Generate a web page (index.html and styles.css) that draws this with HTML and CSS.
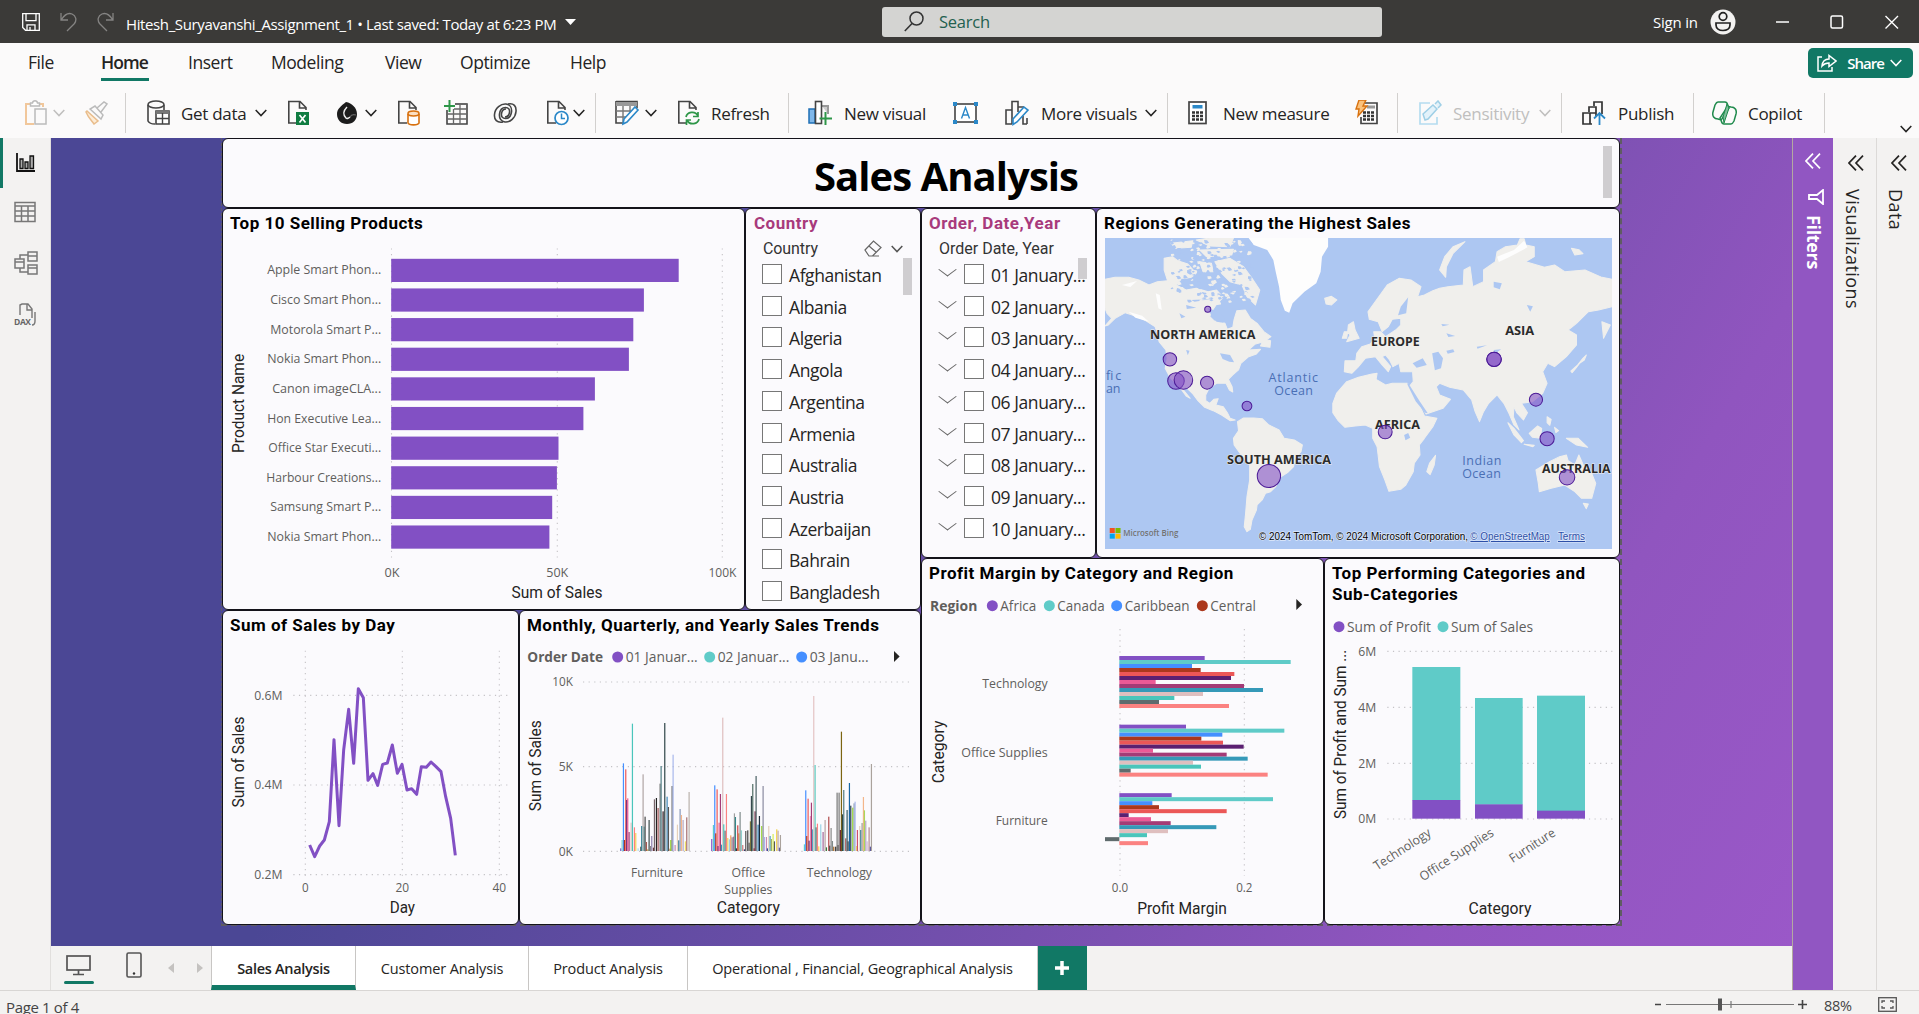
FILE: index.html
```html
<!DOCTYPE html>
<html lang="en">
<head>
<meta charset="utf-8">
<title>Hitesh_Suryavanshi_Assignment_1</title>
<link rel="stylesheet" href="styles.css">
</head>
<body>
<svg class="defs" width="0" height="0">
  <symbol id="chev" viewBox="0 0 12 8"><path d="M.7 1l5.3 5.6L11.3 1" fill="none" stroke="currentColor" stroke-width="1.5"/></symbol>
  <symbol id="page" viewBox="0 0 24 26"><path d="M10 23H1.8V1.5H13l6 6V10M12.500 1.500V8H19" fill="none" stroke="#444" stroke-width="1.6"/></symbol>
  <symbol id="collapse" viewBox="0 0 16 16"><path d="M8 .7L1 8l7 7.300M15 .7L8 8l7 7.300" fill="none" stroke="currentColor" stroke-width="1.700"/></symbol>
</svg>
<div class="app">
  <header class="titlebar">
    <svg class="save" width="18" height="18" viewBox="0 0 18 18"><path d="M.7.7h16.600v16.600H3.500L.7 14.500zM4 .7v7h10v-7M5 17.300v-5.500h8v5.500M8 14v3" fill="none" stroke="#fff" stroke-width="1.300"/></svg>
    <svg class="undo" width="17" height="20" viewBox="0 0 17 20"><path d="M1 1v7h7M1.500 7.500C5 2 9 .8 12 2c4 1.800 5 6 2.500 9.500L7 19" fill="none" stroke="#858483" stroke-width="1.300"/></svg>
    <svg class="redo" width="17" height="20" viewBox="0 0 17 20"><path d="M16 1v7H9M15.500 7.500C12 2 8 .8 5 2 1 3.800 0 8 2.500 11.500L10 19" fill="none" stroke="#858483" stroke-width="1.300"/></svg>
    <span class="doc">Hitesh_Suryavanshi_Assignment_1 • Last saved: Today at 6:23 PM</span>
    <svg class="caret" width="11" height="6" viewBox="0 0 11 6"><path d="M0 0h11L5.500 6z" fill="#fff"/></svg>
    <div class="search">
      <svg width="20" height="21" viewBox="0 0 20 21"><circle cx="12.500" cy="7.500" r="6.500" fill="none" stroke="#333" stroke-width="1.500"/><path d="M8 12.500L.8 20" stroke="#333" stroke-width="1.600"/></svg>
      <span>Search</span>
    </div>
    <span class="signin">Sign in</span>
    <svg class="user" width="26" height="26" viewBox="0 0 26 26"><circle cx="13" cy="13" r="12.500" fill="#f3f2f1"/><circle cx="13" cy="7.500" r="3.800" fill="none" stroke="#222" stroke-width="1.700"/><path d="M6 14h14v2c0 3.500-3 5.500-7 5.500S6 19.500 6 16z" fill="none" stroke="#222" stroke-width="1.700"/></svg>
    <svg class="win" width="128" height="16" viewBox="0 0 128 16"><path d="M1 8h13" stroke="#fff" stroke-width="1.500"/><rect x="56" y="2" width="11.500" height="12" rx="1.500" fill="none" stroke="#fff" stroke-width="1.500"/><path d="M110.500 2l12.500 12.500M123 2l-12.500 12.500" stroke="#fff" stroke-width="1.400"/></svg>
  </header>
  <nav class="menu">
    <div class="tabs"><span>File</span><span class="on">Home</span><span>Insert</span><span>Modeling</span><span>View</span><span>Optimize</span><span>Help</span></div>
    <button class="share">
      <svg width="20" height="18" viewBox="0 0 20 18"><path d="M5 3H1v14h14v-4M5 12c.5-5 3-7 7-7V1.500L19 7l-7 5.500V9c-3 0-5 .8-7 3z" fill="none" stroke="#fff" stroke-width="1.500"/></svg>
      <span>Share</span><svg width="12" height="8"><use href="#chev"/></svg>
    </button>
  </nav>
  <div class="ribbon">
    <svg width="24" height="26" viewBox="0 0 24 26"><path d="M5 4H1v20h8M15 4h3v3" fill="none" stroke="#f1c79b" stroke-width="2"/><path d="M5.500 6V3h2c.5-3 4.500-3 5 0h2v3z" fill="#fff" stroke="#bbb" stroke-width="1.500"/><rect x="10" y="9" width="11" height="15" fill="#fbfafa" stroke="#bbb" stroke-width="1.500"/></svg>
    <svg class="off" width="12" height="8"><use href="#chev"/></svg>
    <svg width="24" height="24" viewBox="0 0 24 24"><path d="M2 10l11 10-4 3c-3-4-6-7-8-12z" fill="#fdecd6" stroke="#e9bd8c" stroke-width="1.500"/><path d="M5 8l11 10 2-4-8-9zM12 7l7-6 3 2-6 8" fill="#fbfafa" stroke="#bbb" stroke-width="1.500"/></svg>
    <i></i>
    <svg width="24" height="26" viewBox="0 0 24 26"><ellipse cx="9" cy="4.500" rx="8" ry="3.500" fill="none" stroke="#444" stroke-width="1.600"/><path d="M1 5v16c1 2 4 3 7 3M17 5v5" fill="none" stroke="#444" stroke-width="1.600"/><path d="M9 11h13v13H9z" fill="#fff" stroke="#444" stroke-width="1.600"/><path d="M9 12.500h13" stroke="#777" stroke-width="3"/><path d="M9 18.500h13M15.500 13v11" stroke="#444" stroke-width="1.400"/></svg>
    <span>Get data</span>
    <svg width="12" height="8"><use href="#chev"/></svg>
    <svg width="24" height="26" viewBox="0 0 24 26"><use href="#page"/><rect x="9" y="12" width="13" height="13" fill="#107c41"/><path d="M12.500 15l6 7.500M18.500 15l-6 7.500" stroke="#fff" stroke-width="1.700"/></svg>
    <svg width="24" height="24" viewBox="0 0 24 24"><path d="M10 1c6 1 11 6 11 12s-4 10-10 10S1 19 1 13C1 8 5 5 10 1z" fill="#1c1c1c"/><path d="M11 6c-4 4-4 8-1 11 1 1 3 0 4-1" fill="none" stroke="#eee" stroke-width="1.500"/><path d="M14 16c1-2 3-3 6-2" fill="none" stroke="#666" stroke-width="1.200"/></svg>
    <svg width="12" height="8"><use href="#chev"/></svg>
    <svg width="24" height="26" viewBox="0 0 24 26"><use href="#page"/><path d="M11 14v9c1 2.500 10 2.500 11 0v-9" fill="#fff" stroke="#d8710f" stroke-width="1.600"/><ellipse cx="16.500" cy="13.500" rx="5.500" ry="2.500" fill="#fbe0c3" stroke="#d8710f" stroke-width="1.600"/></svg>
    <svg width="24" height="26" viewBox="0 0 24 26"><path d="M3 10v14h20V4H11" fill="none" stroke="#444" stroke-width="1.600"/><path d="M11 4h12M3 14h20M3 19h20M9.500 9v15M16 5v19M10 9h13" stroke="#666" stroke-width="1.300"/><path d="M5.500 0v12M0 6h11" stroke="#2e9648" stroke-width="2"/></svg>
    <svg width="25" height="24" viewBox="0 0 25 24"><path d="M10 21C4 22 1 19 1.500 13.500 2 7 8 2.500 13 3c4 .5 6 4 5.500 8-.5 4-3 6.500-6 6.500s-4.500-2-4-5c.4-2.500 2-4.500 4.500-4.500" fill="none" stroke="#444" stroke-width="1.600"/><path d="M15 3c6-1 8.500 2 8 7.500C22.500 17 17 21.500 12 21c-4-.5-6-4-5.500-8 .5-4 3-6.500 6-6.500s4.500 2 4 5c-.4 2.500-2 4.500-4.500 4.500" fill="none" stroke="#444" stroke-width="1.600"/></svg>
    <svg width="24" height="26" viewBox="0 0 24 26"><use href="#page"/><circle cx="15.500" cy="18" r="6.500" fill="#fff" stroke="#2b88c8" stroke-width="1.700"/><path d="M15.500 13.500V18.500H19" fill="none" stroke="#2b88c8" stroke-width="1.500"/></svg>
    <svg width="12" height="8"><use href="#chev"/></svg>
    <i></i>
    <svg width="26" height="26" viewBox="0 0 26 26"><path d="M1 1.500h21V8M1 1v22h7" fill="none" stroke="#444" stroke-width="1.600"/><path d="M1 4h21" stroke="#999" stroke-width="4"/><path d="M1 11h18M1 17h11M8 6v16M15 6v8" stroke="#777" stroke-width="1.400"/><path d="M9 19L20 7l3 3-11 12-4 2z" fill="#fff" stroke="#2b88c8" stroke-width="1.600"/></svg>
    <svg width="12" height="8"><use href="#chev"/></svg>
    <svg width="24" height="26" viewBox="0 0 24 26"><use href="#page"/><path d="M9 17c1-5 9-7 12-1M21 12v4.500h-5M22 19c-1 5-9 7-12 1M9.500 25v-5H14" fill="none" stroke="#2e9648" stroke-width="1.700"/></svg>
    <span>Refresh</span>
    <i></i>
    <svg width="26" height="26" viewBox="0 0 26 26"><rect x="1" y="9" width="6" height="14" fill="#7fb8ea" stroke="#1f6fb5" stroke-width="1.500"/><path d="M14 6h6v8" fill="#ccc" stroke="#999" stroke-width="2"/><rect x="7.500" y="1.500" width="6" height="22" fill="#fff" stroke="#444" stroke-width="1.600"/><path d="M17.500 12v13M11.500 18.500H24" stroke="#2e9648" stroke-width="2"/></svg>
    <span>New visual</span>
    <svg width="26" height="22" viewBox="0 0 26 22"><rect x="2" y="2" width="21" height="18" fill="#fff" stroke="#444" stroke-width="1.600"/><path d="M0 0h4v4H0zM21 0h4v4h-4zM0 18h4v4H0zM21 18h4v4h-4z" fill="#2b88c8"/><path d="M8.500 16.500l4-11 4 11M10 13h5.500" fill="none" stroke="#2b88c8" stroke-width="1.400"/></svg>
    <svg width="26" height="26" viewBox="0 0 26 26"><path d="M7 10H1v14h6M7 24V1.500h6V12M13 7h6M18 16v8h4M22 24v-6" fill="none" stroke="#444" stroke-width="1.600"/><path d="M8 19L19 7l4 3-11 12-4 2.500z" fill="#fff" stroke="#2b88c8" stroke-width="1.600"/></svg>
    <span>More visuals</span>
    <svg width="12" height="8"><use href="#chev"/></svg>
    <i></i>
    <svg width="20" height="26" viewBox="0 0 20 26"><rect x="1" y="2" width="17" height="21.500" fill="#fff" stroke="#444" stroke-width="1.700"/><rect x="4.500" y="5" width="10" height="3.500" fill="#2b88c8"/><path d="M4 12.500h11M4 16h11M4 19.500h11" stroke="#333" stroke-width="2.300" stroke-dasharray="3 1"/></svg>
    <span>New measure</span>
    <svg width="24" height="26" viewBox="0 0 24 26"><path d="M10 3h12v20.500H6V17" fill="none" stroke="#444" stroke-width="1.700"/><path d="M8 12.500h11M8 16h11M8 19.500h11" stroke="#333" stroke-width="2.300" stroke-dasharray="3 1"/><path d="M12 7h8" stroke="#999" stroke-width="3"/><path d="M4 0h7L8 6h4L3 16l1-7H1z" fill="#fbc27c" stroke="#d8710f" stroke-width="1.400"/></svg>
    <i></i>
    <svg width="24" height="26" viewBox="0 0 24 26"><path d="M11 3H1v21h17v-7" fill="none" stroke="#b5dcef" stroke-width="1.700"/><path d="M4 14L14 5l4 4-9 10-3 1zM16 4l3-3 3 4-3 3" fill="#e3f2fa" stroke="#9fcfe6" stroke-width="1.500"/></svg>
    <span class="dim">Sensitivity</span>
    <svg class="off" width="12" height="8"><use href="#chev"/></svg>
    <i></i>
    <svg width="25" height="26" viewBox="0 0 25 26"><path d="M10 24H1V13h7v11M7 12V7h7v4M12 6V2h8v12M14 16V8M8 13h6" fill="none" stroke="#333" stroke-width="1.700"/><path d="M17.500 25V13M12 18.500l5.500-5.500 5.500 5.500" fill="none" stroke="#2b88c8" stroke-width="1.800"/></svg>
    <span>Publish</span>
    <i></i>
    <svg width="25" height="26" viewBox="0 0 25 26"><path d="M6 2h7c3 0 2 3 4 6l-6 9c-1 3-2 3-5 2-4 0-6-3-5-7L3 5c1-2 2-3 3-3z" fill="none" stroke="#1f8a4c" stroke-width="1.500"/><path d="M19 24h-7c-3 0-2-3-4-6l6-9c1-3 2-3 5-2 4 0 6 3 5 7l-2 7c-1 2-2 3-3 3z" fill="none" stroke="#1f8a4c" stroke-width="1.500"/><path d="M11 17l4-13 2 4-5 15z" fill="#7fbf9b" stroke="#1f8a4c"/></svg>
    <span>Copilot</span>
    <i></i>
    <svg class="more" width="12" height="8"><use href="#chev"/></svg>
  </div>
  <div class="work">
    <aside class="rail">
      <svg width="20" height="20" viewBox="0 0 20 20"><path d="M1 0v18h18" fill="none" stroke="#111" stroke-width="1.800"/><path d="M4 6h3v9.500H4zM9 9h3v6.500H9zM14 3h3.500v12.500H14z" fill="#aaa" stroke="#111" stroke-width="1.300"/></svg>
      <svg width="22" height="22" viewBox="0 0 22 22"><path d="M1 1.500h20v19H1zM1 5h20M1 10h20M1 15h20M7.500 5v15M14 5v15" fill="none" stroke="#777" stroke-width="1.500"/></svg>
      <svg width="24" height="24" viewBox="0 0 24 24"><path d="M14 1h9v9h-9zM14 5h9M14 14h9v9h-9zM14 17h9M1 8h9v9H1zM1 11h9M6 8V4h8M6 17v4h8" fill="none" stroke="#777" stroke-width="1.500"/></svg>
      <svg width="24" height="24" viewBox="0 0 24 24"><path d="M6 12V2l2-1h6l4 5v9M13 1v6h5M21 9v9c0 3-1 4-3 4" fill="none" stroke="#777" stroke-width="1.400"/><text x="0" y="21.500" font-size="8.500" font-weight="700" fill="#666" textLength="17">DAX</text></svg>
    </aside>
    <main class="center">
      <div class="canvas">
        <div class="report">
          <section class="card banner"><h1>Sales Analysis</h1><b class="thumb"></b></section>
          <div class="cols">
            <div class="half">
              <div class="row upper-left">
                <section class="card"><h2>Top 10 Selling Products</h2><svg id="top10" width="521" height="372" viewBox="223 236.600 521 372"></svg></section>
                <section class="card slicer country"><h2 class="rose">Country</h2>
                  <div class="sub"><span>Country</span><svg class="eraser" width="18" height="17" viewBox="0 0 18 17"><path d="M1 10L9.500 1 17 7.500 8.500 16H5zM5 6l7.500 6.500M6 16h9" fill="none" stroke="#666" stroke-width="1.200"/></svg><svg width="12" height="8"><use href="#chev"/></svg></div>
                  <ul><li>Afghanistan</li><li>Albania</li><li>Algeria</li><li>Angola</li><li>Argentina</li><li>Armenia</li><li>Australia</li><li>Austria</li><li>Azerbaijan</li><li>Bahrain</li><li>Bangladesh</li></ul><b class="thumb"></b></section>
              </div>
              <div class="row lower-left">
                <section class="card"><h2>Sum of Sales by Day</h2><svg id="days" width="295" height="283" viewBox="24 117 885 849"></svg></section>
                <section class="card"><h2>Monthly, Quarterly, and Yearly Sales Trends</h2><svg id="trend" width="400" height="283" viewBox="15 117 1200 849"></svg></section>
              </div>
            </div>
            <div class="half">
              <div class="row upper-right">
                <section class="card slicer dates"><h2 class="rose">Order, Date,Year</h2>
                  <div class="sub"><span>Order Date, Year</span></div>
                  <ul><li>01 January...</li><li>02 January...</li><li>03 January...</li><li>04 January...</li><li>06 January...</li><li>07 January...</li><li>08 January...</li><li>09 January...</li><li>10 January...</li></ul><b class="thumb"></b></section>
                <section class="card mapcard"><h2>Regions Generating the Highest Sales</h2><svg id="map" width="507" height="311" viewBox="30 144 1500 933" preserveAspectRatio="none"></svg></section>
              </div>
              <div class="row lower-right">
                <section class="card"><h2>Profit Margin by Category and Region</h2><svg id="margin" width="401" height="336" viewBox="21 109 1203 1008"></svg></section>
                <section class="card"><h2 class="two">Top Performing Categories and Sub-Categories</h2><svg id="cats" width="295" height="312" viewBox="30 181 885 936"></svg></section>
              </div>
            </div>
          </div>
        </div>
      </div>
      <footer class="sheets">
        <div class="views">
          <svg class="on" width="30" height="32" viewBox="0 0 30 32"><rect x="3" y="3" width="23" height="14" fill="none" stroke="#555" stroke-width="1.700"/><path d="M14.500 17v4M9 21.500h11" stroke="#555" stroke-width="1.700"/><rect y="28" width="30" height="3" rx="1.500" fill="#117865"/></svg>
          <svg width="16" height="26" viewBox="0 0 16 26"><rect x="1" y="1" width="14" height="24" rx="1.500" fill="none" stroke="#555" stroke-width="1.600"/><circle cx="8" cy="21.500" r="1.200" fill="#333"/></svg>
          <svg width="6" height="10" viewBox="0 0 6 10"><path d="M6 0v10L0 5z" fill="#c4c2c0"/></svg>
          <svg width="6" height="10" viewBox="0 0 6 10"><path d="M0 0v10l6-5z" fill="#c4c2c0"/></svg>
        </div>
        <span class="sheet on">Sales Analysis</span><span class="sheet">Customer Analysis</span><span class="sheet">Product Analysis</span><span class="sheet">Operational , Financial, Geographical Analysis</span>
        <span class="add"><svg width="14" height="14" viewBox="0 0 14 14"><path d="M7 0v14M0 7h14" stroke="#fff" stroke-width="3.500"/></svg></span>
      </footer>
    </main>
    <aside class="pane filters"><svg width="16" height="16"><use href="#collapse"/></svg><svg class="funnel" width="16" height="16" viewBox="0 0 16 16"><path d="M15 1v14L9 10H1V6h8z" fill="none" stroke="#fff" stroke-width="1.800"/></svg><span>Filters</span></aside>
    <aside class="pane"><svg width="16" height="16"><use href="#collapse"/></svg><span>Visualizations</span></aside>
    <aside class="pane data"><svg width="16" height="16"><use href="#collapse"/></svg><span>Data</span></aside>
  </div>
  <footer class="status"><span class="pg">Page 1 of 4</span>
    <svg width="152" height="16" viewBox="0 0 152 16"><path d="M0 7.500h6M143 7.500h9M147.500 3v9" stroke="#444" stroke-width="1.600"/><path d="M11 7.500h128M76 4v7" stroke="#777" stroke-width="1.200"/><rect x="63" y="1.500" width="4" height="12" fill="#555"/></svg>
    <span class="pct">88%</span>
    <svg width="19" height="15" viewBox="0 0 19 15"><rect x=".7" y=".7" width="17.600" height="13.600" fill="none" stroke="#555" stroke-width="1.300"/><path d="M4 6V4h3M12 4h3v2M15 9v2h-3M7 11H4V9" fill="none" stroke="#555" stroke-width="1.300"/></svg>
  </footer>
</div>
<script src="script.js"></script>
</body>
</html>
```
FILE: styles.css
```css
* { box-sizing: border-box; margin: 0; padding: 0; }
body { width: 1919px; height: 1014px; overflow: hidden; font-family: "Open Sans", "Noto Sans", sans-serif; color: #252423; }
svg { display: block; flex: none; }
svg text { font-family: "Open Sans", "Noto Sans", sans-serif; }
.defs { position: absolute; }
.app { height: 1014px; display: flex; flex-direction: column; background: #f3f2f1; }

.titlebar { height: 43px; flex: none; background: #3b3a38; display: flex; align-items: center; color: #fff; padding-left: 22px; }
.undo { margin-left: 20px; }
.redo { margin-left: 20px; }
.doc { margin-left: 12px; width: 430px; font-size: 15px; letter-spacing: -.38px; white-space: nowrap; padding-top: 5px; }
.caret { margin-left: 9px; }
.search { margin-left: 306px; width: 500px; height: 30px; background: #d4d4d2; border-radius: 3px; display: flex; align-items: center; padding-left: 22px; gap: 15px; color: #23604f; font-size: 16.500px; letter-spacing: -.25px; }
.signin { margin-left: 271px; width: 45px; font-size: 15px; letter-spacing: -.2px; white-space: nowrap; }
.user { margin-left: 12px; }
.win { margin-left: 39px; }

.menu { height: 39px; flex: none; background: #fbfafa; display: flex; justify-content: space-between; padding: 5px 6px 0 28px; }
.tabs { display: grid; grid-template-columns: 73px 87px 83px 114px 75px 110px 60px; justify-items: start; font-size: 17.500px; letter-spacing: -.45px; line-height: 29px; height: 34px; }
.tabs .on { font-weight: 600; border-bottom: 3px solid #117865; letter-spacing: -.9px; height: 33px; width: 48px; }
.share { width: 105px; height: 30px; border: 0; border-radius: 5px; background: #117865; color: #fff; display: flex; align-items: center; padding-left: 9px; font: 600 15px "Open Sans", sans-serif; letter-spacing: -1px; }
.share span { margin: 0 6px 0 10px; width: 37px; }

.ribbon { height: 56px; flex: none; background: #fbfafa; display: grid; align-items: center; padding: 6px 0 0 25px; font-size: 17px; letter-spacing: -.3px; white-space: nowrap;
  grid-template-columns: 28px 32px 40px 22px 34px 74px 32px 49px 29px 32px 47px 49px 53px 27px 22px 20px 30px 32px 34px 77px 20px 36px 109px 52px 36px 104px 22px 21px 35px 132px 42px 22px 34px 86px 22px 21px 36px 75px 19px 36px 76px 76px 12px; }
.ribbon i { width: 1px; height: 40px; background: #d2d0ce; }
.ribbon .dim { color: #c0bfbe; }
.off { color: #c0bfbe; }
.more { align-self: end; margin-bottom: 5px; }

.work { height: 852px; flex: none; display: flex; }
.rail { width: 51px; background: linear-gradient(#117865, #117865) 0 0 / 3px 50px no-repeat #f3f2f1; border-right: 1px solid #e1dfdd; display: flex; flex-direction: column; padding: 15px 0 0 14px; gap: 28px; }
.rail svg:first-child { margin: 0 0 0 2px; }
.center { width: 1742px; }
.canvas { height: 808px; padding-left: 170px; background: linear-gradient(120deg, #4b4795 30%, #7c51b2 69%, #9055bf 83%, #9a58c8 100%); }
.report { width: 1401px; height: 788px; border: 1px dashed #5f5c62; border-width: 0 2px 2px 1px; }
.card { background: #fbfafd; border: 1px solid #14131a; border-radius: 6px; position: relative; flex: none; overflow: hidden; }
.card h2 { font: 700 17px/20px Roboto, sans-serif; letter-spacing: .5px; color: #000; height: 28px; padding: 4px 0 0 7px; white-space: nowrap; }
.card h2.two { height: 52px; white-space: normal; line-height: 21px; padding-right: 28px; }
.card h2.rose { color: #a83a7c; }
.slicer.country h2 { padding-left: 8px; }
.banner { height: 70px; }
.banner h1 { font-size: 40px; line-height: 74px; letter-spacing: -.94px; color: #000; text-align: center; padding-left: 50px; }
.thumb { position: absolute; background: #cfcdd0; width: 9px; }
.banner .thumb { right: 7px; top: 7px; height: 52px; }
.cols, .row { display: flex; }
.half { width: 699px; }
.upper-left .card { height: 402px; width: 523px; }
.upper-left .country { width: 176px; }
.lower-left .card { height: 315px; width: 297px; }
.lower-left .card + .card { width: 402px; }
.upper-right .card { height: 350px; width: 175px; }
.upper-right .mapcard { width: 524px; }
.mapcard svg { margin: 1px 0 0 8px; }
.lower-right .card { height: 367px; width: 403px; }
.lower-right .card + .card { width: 296px; }
.slicer .sub { display: flex; align-items: center; height: 23px; padding-left: 17px; font: 16px Roboto, sans-serif; letter-spacing: -.1px; color: #333; }
.slicer .sub .eraser { margin: 0 9px 0 auto; }
.slicer .sub svg:last-child { margin-right: 17px; color: #555; }
.slicer ul { list-style: none; }
.slicer li { height: 31.730px; line-height: 30px; font-size: 17.500px; letter-spacing: -.42px; padding-left: 43px; position: relative; white-space: nowrap; }
.slicer li::before { content: ""; position: absolute; left: 16px; top: 4px; width: 18px; height: 18px; border: 1px solid #777; background: #fff; }
.slicer .thumb { right: 8px; top: 49px; height: 37px; }
.dates .thumb { height: 21px; }
.dates .sub { letter-spacing: 0; }
.dates li { padding-left: 69px; }
.dates li::before { left: 42px; }
.dates li::after { content: ""; position: absolute; left: 19px; top: 3px; width: 12px; height: 12px; border: solid #666; border-width: 0 1px 1px 0; transform: scaleY(.75) rotate(45deg); }

.sheets { height: 44px; background: #f3f2f1; display: flex; font-size: 14.500px; letter-spacing: -.12px; line-height: 46px; }
.views { width: 160px; display: flex; padding: 7px 0 0 13px; }
.views svg:nth-child(2) { margin: -1px 0 0 32px; }
.views svg:nth-child(3) { margin: 10px 23px 0 26px; }
.views svg:nth-child(4) { margin-top: 10px; }
.sheet { background: #fff; border-right: 1px solid #c8c6c4; text-align: center; white-space: nowrap; width: 173px; }
.sheet.on { width: 145px; border-bottom: 5px solid #117865; border-left: 1px solid #c8c6c4; font-weight: 600; letter-spacing: -.3px; }
.sheet:nth-of-type(3) { width: 159px; }
.sheet:nth-of-type(4) { width: 350px; }
.add { width: 49px; background: #117865; display: grid; place-items: center; }

.pane { width: 44px; border-right: 1px solid #dcdad8; padding: 17px 0 0 15px; color: #252423; }
.pane span { writing-mode: vertical-rl; font-size: 18px; font-weight: 500; letter-spacing: .45px; line-height: 20px; margin: 18px 0 0 -5px; display: block; }
.pane.data { width: 42px; border: 0; padding-left: 14px; }
.pane.filters { width: 41px; background: #9156c2; border-left: 1px solid #b3a9a0; border-right: 0; color: #fff; padding: 15px 0 0 12px; }
.filters .funnel { margin: 20px 0 0 3px; }
.filters span { font-weight: 700; margin: 10px 0 0 -1px; letter-spacing: -.35px; }

.status { flex: 1; border-top: 1px solid #d8d6d4; display: flex; align-items: flex-start; padding: 7px 0 0 6px; font-size: 15px; letter-spacing: -.35px; color: #444; }
.pg { width: 1649px; line-height: 18px; height: 16px; }
.status svg { margin-top: -1px; }
.pct { width: 54px; margin-left: 17px; line-height: 16px; font-size: 14.500px; }
```
FILE: script.js
```js
const fill = (id, parts) => { document.getElementById(id).innerHTML = parts.join(''); };
const rect = (x, y, w, h, c, extra = '') => `<rect x="${x}" y="${y}" width="${w}" height="${h}" fill="${c}" ${extra}/>`;
const dots = (x1, y1, x2, y2, k = 1) => `<path d="M${x1} ${y1}L${x2} ${y2}" stroke="#c4c2c6" stroke-width="${1.1 * k}" stroke-dasharray="${1.2 * k} ${4.4 * k}"/>`;
// Text with a fixed advance width; rot turns it a quarter to the left, or by the given angle.
function text(x, y, s, size, len, o = {}) {
  const rot = o.rot ? `transform="rotate(${o.rot} ${x} ${y})"` : '';
  const tl = len ? `textLength="${len}" lengthAdjust="spacingAndGlyphs"` : '';
  return `<text x="${x}" y="${y}" font-size="${size}" ${tl} ${rot} text-anchor="${o.a || 'start'}" fill="${o.c || '#605e5c'}" style="font-weight:${o.b || 400};${o.din ? 'font-family:Roboto,sans-serif' : ''};${o.css || ''}">${s}</text>`;
}
const din = { din: 1, a: 'middle', c: '#252423' };
const dinV = { ...din, rot: -90 };

// Top 10 products
const products = [['Apple Smart Phon...', 678.7, 114], ['Cisco Smart Phon...', 643.9, 111], ['Motorola Smart P...', 633.3, 111], ['Nokia Smart Phon...', 628.9, 114], ['Canon imageCLA...', 594.9, 109], ['Hon Executive Lea...', 583.4, 114], ['Office Star Executi...', 558.5, 113], ['Harbour Creations...', 556.9, 115], ['Samsung Smart P...', 552.2, 111], ['Nokia Smart Phon...', 549.4, 114]];
fill('top10', [
  dots(391.5, 248, 391.5, 561), dots(557.3, 248, 557.3, 561), dots(722.3, 248, 722.3, 561),
  ...products.map(([n, end, w], i) => rect(391.2, 258.4 + i * 29.63, end - 391.2, 23.2, '#8250c4') + text(381.2, 274 + i * 29.63, n, 12.5, w, { a: 'end' })),
  text(392, 577, '0K', 12.5, 15, { a: 'middle' }), text(557.3, 577, '50K', 12.5, 22, { a: 'middle' }), text(722.5, 577, '100K', 12.5, 28, { a: 'middle' }),
  text(557, 598, 'Sum of Sales', 16, 91, din), text(244, 403, 'Product Name', 16, 99, dinV)
]);

// Sales by day
const pts = '284,735 299,770 314,738 328,720 343,665 357,419 372,677 386,450 401,328 416,490 430,266 445,293 459,541 474,521 488,556 503,493 517,489 532,435 547,520 561,493 576,570 590,566 605,583 619,500 634,502 648,486 663,500 678,515 692,590 707,655 721,766';
fill('days', [
  ...[271, 562, 853].map(x => dots(x, 152, x, 830, 3)), ...[286, 555, 824].map(y => dots(235, y, 880, y, 3)),
  `<polyline points="${pts}" fill="none" stroke="#8250c4" stroke-width="9" stroke-linejoin="round"/>`,
  ...[['0.6M', 300], ['0.4M', 568], ['0.2M', 837]].map(([t, y]) => text(118, y, t, 38, 85)),
  text(271, 876, '0', 38, 20, { a: 'middle' }), text(562, 876, '20', 38, 41, { a: 'middle' }), text(853, 876, '40', 38, 41, { a: 'middle' }),
  text(562, 938, 'Day', 48, 76, din), text(88, 486, 'Sum of Sales', 48, 273, dinV)
]);

// Sales trends: x, top, colour
const bars = [
  [317, 745, '#8250c4'], [321, 720, '#7fd8d0'], [325, 490, '#458fff'], [328, 720, '#ab381d'], [332, 508, '#eb5757'], [335, 600, '#5b2071'], [338, 595, '#ec5a96'], [342, 696, '#a43b76'], [348, 668, '#e6c0c0'], [352, 371, '#4ac5bb'], [358, 682, '#fb8281'], [362, 699, '#f4d25a'], [369, 745, '#b0dcec'], [377, 740, '#555'], [380, 678, '#1f7a8c'], [384, 523, '#b0a4a4'], [387, 680, '#5f9ea0'], [390, 650, '#4a4a4a'], [394, 726, '#a45a52'], [398, 748, '#bda23c'], [402, 660, '#3b4a4a'], [406, 738, '#888'], [410, 708, '#8c7fae'], [415, 743, '#5e2e2e'], [418, 598, '#77656a'], [424, 594, '#222'], [429, 624, '#a05050'], [435, 551, '#777'], [438, 498, '#4f7c83'], [444, 634, '#301a22'], [449, 369, '#2f4648'], [456, 590, '#3f87b7'], [460, 621, '#555'], [465, 746, '#a6611a'], [467, 720, '#95d52a'], [471, 558, '#666'], [474, 464, '#a8b7ec'], [480, 735, '#c98ab0'], [487, 674, '#e5d0bb'], [491, 721, '#397d93'], [495, 627, '#8797b8'], [499, 645, '#f4b58a'], [504, 660, '#b4a6c0'], [511, 724, '#f0e16a'], [515, 652, '#a67070'], [522, 576, '#b9b1ab'],
  [590, 717, '#8250c4'], [595, 675, '#5fcbc8'], [599, 556, '#458fff'], [602, 700, '#ab381d'], [606, 568, '#eb5757'], [609, 738, '#5b2071'], [612, 668, '#ec5a96'], [616, 582, '#a43b76'], [619, 734, '#3599b8'], [623, 353, '#dfbfbf'], [626, 673, '#4ac5bb'], [630, 692, '#5f6b6d'], [634, 582, '#fb8281'], [638, 714, '#f4d25a'], [643, 718, '#9ad3e5'], [647, 706, '#f0a060'], [651, 712, '#888'], [655, 710, '#a66999'], [658, 640, '#a0a0a0'], [661, 651, '#35888a'], [664, 745, '#333'], [668, 676, '#cf4444'], [671, 700, '#d08040'], [675, 636, '#7f8a8a'], [679, 691, '#8fd0cc'], [683, 735, '#c77'], [688, 748, '#336'], [692, 693, '#555'], [698, 691, '#444'], [702, 728, '#555'], [706, 664, '#8a7d3c'], [709, 588, '#35484d'], [713, 552, '#4f6c63'], [717, 745, '#8b3434'], [720, 634, '#701c3a'], [723, 528, '#495f63'], [729, 674, '#2a78b0'], [733, 648, '#1e2c3a'], [740, 678, '#95d52a'], [744, 558, '#8a8aa0'], [748, 711, '#a8b7ec'], [754, 711, '#c98ab0'], [757, 745, '#2e50a0'], [761, 678, '#e5d0bb'], [765, 708, '#459bc0'], [769, 717, '#a8b060'], [774, 702, '#d6ee56'], [778, 724, '#555'], [785, 688, '#f0d040'], [789, 692, '#c0a8b0'], [793, 743, '#5050a0'], [796, 705, '#aaa29c'],
  [868, 733, '#5fcbc8'], [872, 571, '#458fff'], [875, 708, '#ab381d'], [879, 596, '#eb5757'], [882, 722, '#5b2071'], [886, 648, '#ec9abf'], [889, 608, '#a43b76'], [893, 688, '#3599b8'], [896, 288, '#e4c3c3'], [900, 495, '#5ecabf'], [903, 682, '#5f6b6d'], [907, 671, '#fb8281'], [911, 739, '#f4d25a'], [917, 673, '#9ad3e5'], [924, 696, '#a66999'], [930, 660, '#b7a4a4'], [934, 742, '#357a3a'], [941, 650, '#b04a4a'], [944, 737, '#444'], [948, 684, '#888'], [952, 723, '#7f8a8a'], [956, 740, '#a6611a'], [962, 740, '#222'], [966, 578, '#777'], [969, 735, '#555'], [972, 578, '#777'], [976, 690, '#701c3a'], [979, 395, '#7c6411'], [982, 643, '#2f4648'], [986, 570, '#4f7c83'], [992, 715, '#a05050'], [996, 630, '#335a66'], [999, 724, '#444'], [1003, 549, '#1767a5'], [1007, 617, '#2c4050'], [1013, 623, '#95d52a'], [1017, 610, '#8a9ab0'], [1020, 605, '#a8b7ec'], [1024, 738, '#f0e16a'], [1027, 690, '#cc4f6a'], [1034, 678, '#e5d0bb'], [1037, 690, '#397d93'], [1041, 669, '#999'], [1045, 591, '#f4b58a'], [1048, 631, '#a8d85a'], [1052, 662, '#b4a6c0'], [1056, 724, '#d0b8d8'], [1062, 682, '#b48a90'], [1066, 740, '#5050a0'], [1069, 492, '#aaa29c']];
const legend = (items, y, size = 45) => items.map(([cx, c, t, w]) => `<circle cx="${cx}" cy="${y - 15}" r="16.5" fill="${c}"/>` + text(cx + 24, y, t, size, w)).join('');
fill('trend', [
  ...[246, 500, 754].map(y => dots(204, y, 1195, y, 3)),
  ...bars.map(([x, y, c]) => rect(x - 1.5, y, 3.6, 753 - y, c)),
  text(37, 186, 'Order Date', 45, 227, { b: 700 }),
  legend([[308, '#8250c4', '01 Januar...', 216], [584, '#5fcbc8', '02 Januar...', 215], [860, '#458fff', '03 Janu...', 177]], 186),
  '<path d="M1137 153v33l17-16.500z" fill="#252423"/>',
  text(174, 258, '10K', 38, 62, { a: 'end' }), text(174, 512, '5K', 38, 43, { a: 'end' }), text(174, 767, '0K', 38, 43, { a: 'end' }),
  text(426, 831, 'Furniture', 38, 156, { a: 'middle' }), text(700, 831, 'Office', 38, 101, { a: 'middle' }), text(700, 882, 'Supplies', 38, 144, { a: 'middle' }), text(973, 831, 'Technology', 38, 196, { a: 'middle' }),
  text(700, 938, 'Category', 48, 189, din), text(79, 497, 'Sum of Sales', 48, 273, dinV)
]);

// Profit margin
const colors = ['#8250c4', '#5fcbc8', '#458fff', '#ab381d', '#eb5757', '#5b2071', '#ec5a96', '#a43b76', '#3599b8', '#dfbfbf', '#4ac5bb', '#5f6b6d', '#fb8281'];
const groups = [
  [316, [869, 1127, 831, 857, 958, 948, 722, 987, 1044, 864, 778, 732, 942]],
  [522, [813, 1108, 922, 859, 924, 986, 714, 935, 998, 834, 858, 647, 1058]],
  [727.5, [770, 1074, 712, 732, 935, 641, 708, 767, 904, 759, 696, 570, 699]]];
fill('margin', [
  dots(615, 235, 615, 976, 3), dots(988, 235, 988, 976, 3),
  ...groups.flatMap(([y, v]) => v.map((e, i) => rect(Math.min(613, e), y + i * 12, Math.abs(e - 613), 12, colors[i]))),
  text(45, 180, 'Region', 45, 142, { b: 700 }),
  legend([[232, '#8250c4', 'Africa', 108], [403, '#5fcbc8', 'Canada', 142], [605, '#458fff', 'Caribbean', 195], [862, '#ab381d', 'Central', 137]], 180),
  '<path d="M1144 145v33l17-16.500z" fill="#252423"/>',
  text(398, 411, 'Technology', 38, 196, { a: 'end' }), text(398, 618, 'Office Supplies', 38, 259, { a: 'end' }), text(398, 822, 'Furniture', 38, 156, { a: 'end' }),
  text(615, 1023, '0.0', 38, 49, { a: 'middle' }), text(988, 1023, '0.2', 38, 49, { a: 'middle' }),
  text(801, 1089, 'Profit Margin', 48, 269, din), text(88, 604, 'Category', 48, 188, dinV)
]);

// Categories
fill('cats', [
  ...[302, 470, 638, 805].map(y => dots(217, y, 892, y, 3)),
  rect(292, 349, 144, 400, '#5fcbc8'), rect(292, 748, 144, 56, '#8250c4'),
  rect(480, 442, 143, 320, '#5fcbc8'), rect(480, 761, 143, 43, '#8250c4'),
  rect(666, 435, 144, 346, '#5fcbc8'), rect(666, 780, 144, 24, '#8250c4'),
  legend([[72, '#8250c4', 'Sum of Profit', 252], [384, '#5fcbc8', 'Sum of Sales', 246]], 243),
  ...[['6M', 315], ['4M', 483], ['2M', 651], ['0M', 818]].map(([t, y]) => text(184, y, t, 38, 54, { a: 'end' })),
  text(351, 853, 'Technology', 38, 196, { a: 'end', rot: -33 }), text(539, 853, 'Office Supplies', 38, 256, { a: 'end', rot: -33 }), text(724, 853, 'Furniture', 38, 156, { a: 'end', rot: -33 }),
  text(555, 1089, 'Category', 48, 189, din), text(94, 551, 'Sum of Profit and Sum ...', 48, 508, dinV)
]);

// Map
const land = [
  'M30 268L60 262 100 262 130 270 160 285 185 275 215 272 240 285 270 300 300 295 335 305 360 300 380 322 362 340 345 365 340 380 352 392 385 400 392 418 408 412 412 388 420 362 445 360 460 385 480 400 500 425 521 440 500 455 475 462 455 480 490 478 478 492 455 500 432 520 425 540 408 555 395 568 406 590 408 606 398 600 388 580 360 580 338 595 328 615 328 632 340 640 352 628 365 626 358 645 380 650 392 668 400 685 415 690 400 692 375 675 350 662 325 652 305 632 290 612 268 590 262 600 282 625 270 618 250 590 222 562 208 535 214 505 210 480 190 455 185 430 178 410 150 392 120 378 90 368 60 385 40 405 30 408 50 385 36 370 30 355z',
  'M205 205L230 200 245 212 275 222 300 250 285 262 255 268 240 285 215 272 205 240zM225 160L290 152 285 172 240 175zM300 150L340 144 410 144 400 170 340 168zM310 180L410 178 405 195 330 200zM355 215L400 205 440 230 465 265 488 300 475 345 450 320 435 285 400 275 375 250z',
  'M310 215L345 220 350 245 320 245zM340 330L365 325 372 342 350 345zM680 325L700 319 716 330 700 345 684 342zM500 448L520 452 518 472 490 468z',
  'M422 695L440 684 470 684 495 686 515 705 545 720 560 745 590 750 614 765 610 785 592 805 588 830 570 848 548 862 535 890 520 905 505 910 495 930 480 945 478 960 465 990 460 1018 450 1025 442 1010 446 970 450 920 458 870 458 825 440 805 412 765 410 745 425 722z',
  'M780 562L820 552 835 550 832 568 860 585 880 580 925 580 940 602 958 640 975 678 1012 685 1000 710 975 745 960 765 962 795 945 820 942 845 920 885 905 898 870 904 858 870 842 830 838 795 835 770 822 745 822 715 800 705 770 708 740 712 720 692 704 668 704 640 715 610 745 575zM990 820L1008 796 1004 825 992 854 982 845z',
  'M738 545L740 512 772 512 775 490 790 470 815 462 828 445 825 425 845 425 860 440 890 420 905 405 905 385 880 388 868 410 850 425 838 395 812 388 808 365 840 320 865 285 900 265 935 270 965 290 955 320 975 315 1000 302 1020 295 1045 290 1090 285 1092 240 1110 230 1118 290 1150 275 1150 240 1185 215 1190 185 1215 170 1250 165 1258 146 1270 146 1275 165 1300 170 1300 200 1275 215 1330 232 1360 225 1390 245 1450 240 1500 262 1530 268 1530 350 1490 360 1460 365 1425 400 1400 420 1425 435 1425 465 1395 500 1360 530 1340 520 1325 545 1338 580 1325 610 1295 635 1262 640 1280 668 1268 690 1248 668 1240 650 1238 680 1255 720 1240 705 1225 670 1210 640 1190 615 1165 640 1150 665 1138 695 1125 665 1115 630 1090 600 1050 592 1020 580 1010 590 1020 615 1052 628 1030 655 980 672 968 650 950 620 930 590 942 575 940 545 905 545 900 520 882 530 872 510 860 495 850 500 875 530 868 545 850 525 830 500 800 505 778 532 760 550z',
  'M750 405L765 395 770 420 782 445 745 455 755 435 748 425zM738 425L748 425 745 445 732 445z',
  'M1305 840L1345 815 1375 800 1395 795 1400 812 1420 825 1432 795 1445 825 1470 850 1482 880 1470 925 1440 925 1420 905 1390 885 1350 895 1315 905 1312 880zM1445 940l15 2-6 14z',
  'M1222 698L1240 715 1268 752 1262 758 1240 735zM1285 730L1310 708 1322 715 1318 745 1295 742zM1270 763l30 3-4 4zM1395 745L1430 745 1458 772 1425 765zM1338 680l12 8-4 18-8-8zM1360 712l12 10-8 6zM1412 548l10-12 12-16 14-10 6-15-10 10-16 20-20 18zM1020 240L1035 200 1060 170 1095 155 1060 190 1040 230 1038 262zM1410 175l22 4 12 12-24 4zM1500 395l25 10-20 40z'];
const white = ['M455 144L470 165 510 180 528 210 535 245 545 290 550 330 562 362 575 368 585 340 620 305 655 280 668 245 672 200 690 170 690 144z', 'M1190 200l50-20 30-28 10 20-55 30-30 14z', 'M80 285l45-12-20 18zM180 310l12 5 6 45-10-5zM100 365l40 12 20 18-40-12z'];
const lakes = ['M335 355l30 10 20 18-5 15-20-3-16-20z', 'M370 490l30 5 12 22-14-2-20-8zM270 480l10 2-5 14zM270 345l30 8-28 4zM285 330l60-3-50 8zM250 370l18 10-12 5z', 'M905 350l22-28-6 48-24 6z', 'M998 490l18-5 14 20-6 30-18 6-4-24zM940 520l30-15 12 20-30 8z', 'M1040 482l20-4 4 8-20 5zM1180 275l24 5-6 18-18-6zM1180 480l22-2-20 14zM1278 345l18 4-8 16zM915 735l12-6 6 14-14 8zM925 575l8 14 28 45 24 36-8-2-28-34-24-50zM1025 402l24 2-20 5zM1040 430l26 8-20 3zM1130 470l30-4-28 10z'];
const bubbles = [[334, 358, 9], [222, 508, 20], [240, 573, 24.5], [262, 570, 27.5], [332, 578, 19.5], [450, 648, 14.5], [515, 858, 34.5], [859, 726, 20.5], [1181, 508, 21.5], [1181, 508, 21.5], [1305, 629, 19.5], [1338, 746, 21], [1397, 862, 23]];
const big = { b: 700, c: '#2b2b2b', css: 'paint-order:stroke;stroke:#f3f1ee;stroke-width:3px' };
const sea = { c: '#4a6fb5' };
const note = { c: '#000', css: "font-family:'Liberation Sans';paint-order:stroke;stroke:#fff;stroke-opacity:.6;stroke-width:4px" };
const link = { c: '#2c4fa8', css: note.css + ';text-decoration:underline' };
// Small islets and inlets of the northern archipelago.
const islets = [];
for (let i = 0; i < 190; i++) {
  const x = 225 + (i * i * 31 + i * 73) % 240, y = 150 + (i * i * 17 + i * 47) % 185;
  islets.push(`<path d="M${x} ${y}l${4 + i % 7} ${-3 + i % 5} ${3 + i % 4} ${3 + i % 5}-${5 + i % 5} 3-4-2z" fill="${i % 2 ? '#adc7f2' : '#f0efec'}"/>`);
}
fill('map', [
  rect(30, 144, 1500, 933, '#adc7f2'),
  ...land.map(d => `<path d="${d}" fill="#f0efec" stroke="#f0efec" stroke-width="3" stroke-linejoin="round"/>`),
  ...white.map(d => `<path d="${d}" fill="#fdfdfd"/>`), ...lakes.map(d => `<path d="${d}" fill="#adc7f2"/>`), ...islets,
  text(163, 448, 'NORTH AMERICA', 39, 312, big), text(817, 468, 'EUROPE', 39, 144, big), text(1214, 435, 'ASIA', 39, 86, big), text(829, 717, 'AFRICA', 39, 133, big), text(391, 822, 'SOUTH AMERICA', 39, 308, big), text(1323, 849, 'AUSTRALIA', 39, 203, big),
  ...[[33, 571, 'fic', 45], [33, 610, 'an', 43], [514, 577, 'Atlantic', 146], [531, 616, 'Ocean', 114], [1087, 826, 'Indian', 116], [1087, 865, 'Ocean', 114]].map(([x, y, t, w]) => text(x, y, t, 37, 0, sea).replace('font-size', `textLength="${w}" font-size`)),
  ...bubbles.map(([x, y, r]) => `<circle cx="${x}" cy="${y}" r="${r}" fill="#8250c4" fill-opacity=".6" stroke="#4b1a96" stroke-width="3"/>`),
  rect(44, 1014, 15, 15, '#f25022'), rect(61, 1014, 15, 15, '#7fba00'), rect(44, 1031, 15, 15, '#00a4ef'), rect(61, 1031, 15, 15, '#ffb900'),
  text(84, 1039, 'Microsoft Bing', 29, 163, { c: '#737373', b: 600 }),
  text(486, 1050, '© 2024 TomTom, © 2024 Microsoft Corporation,', 31, 618, note),
  text(1111, 1050, '© OpenStreetMap', 31, 235, link), text(1370, 1050, 'Terms', 31, 80, link)
]);
```
